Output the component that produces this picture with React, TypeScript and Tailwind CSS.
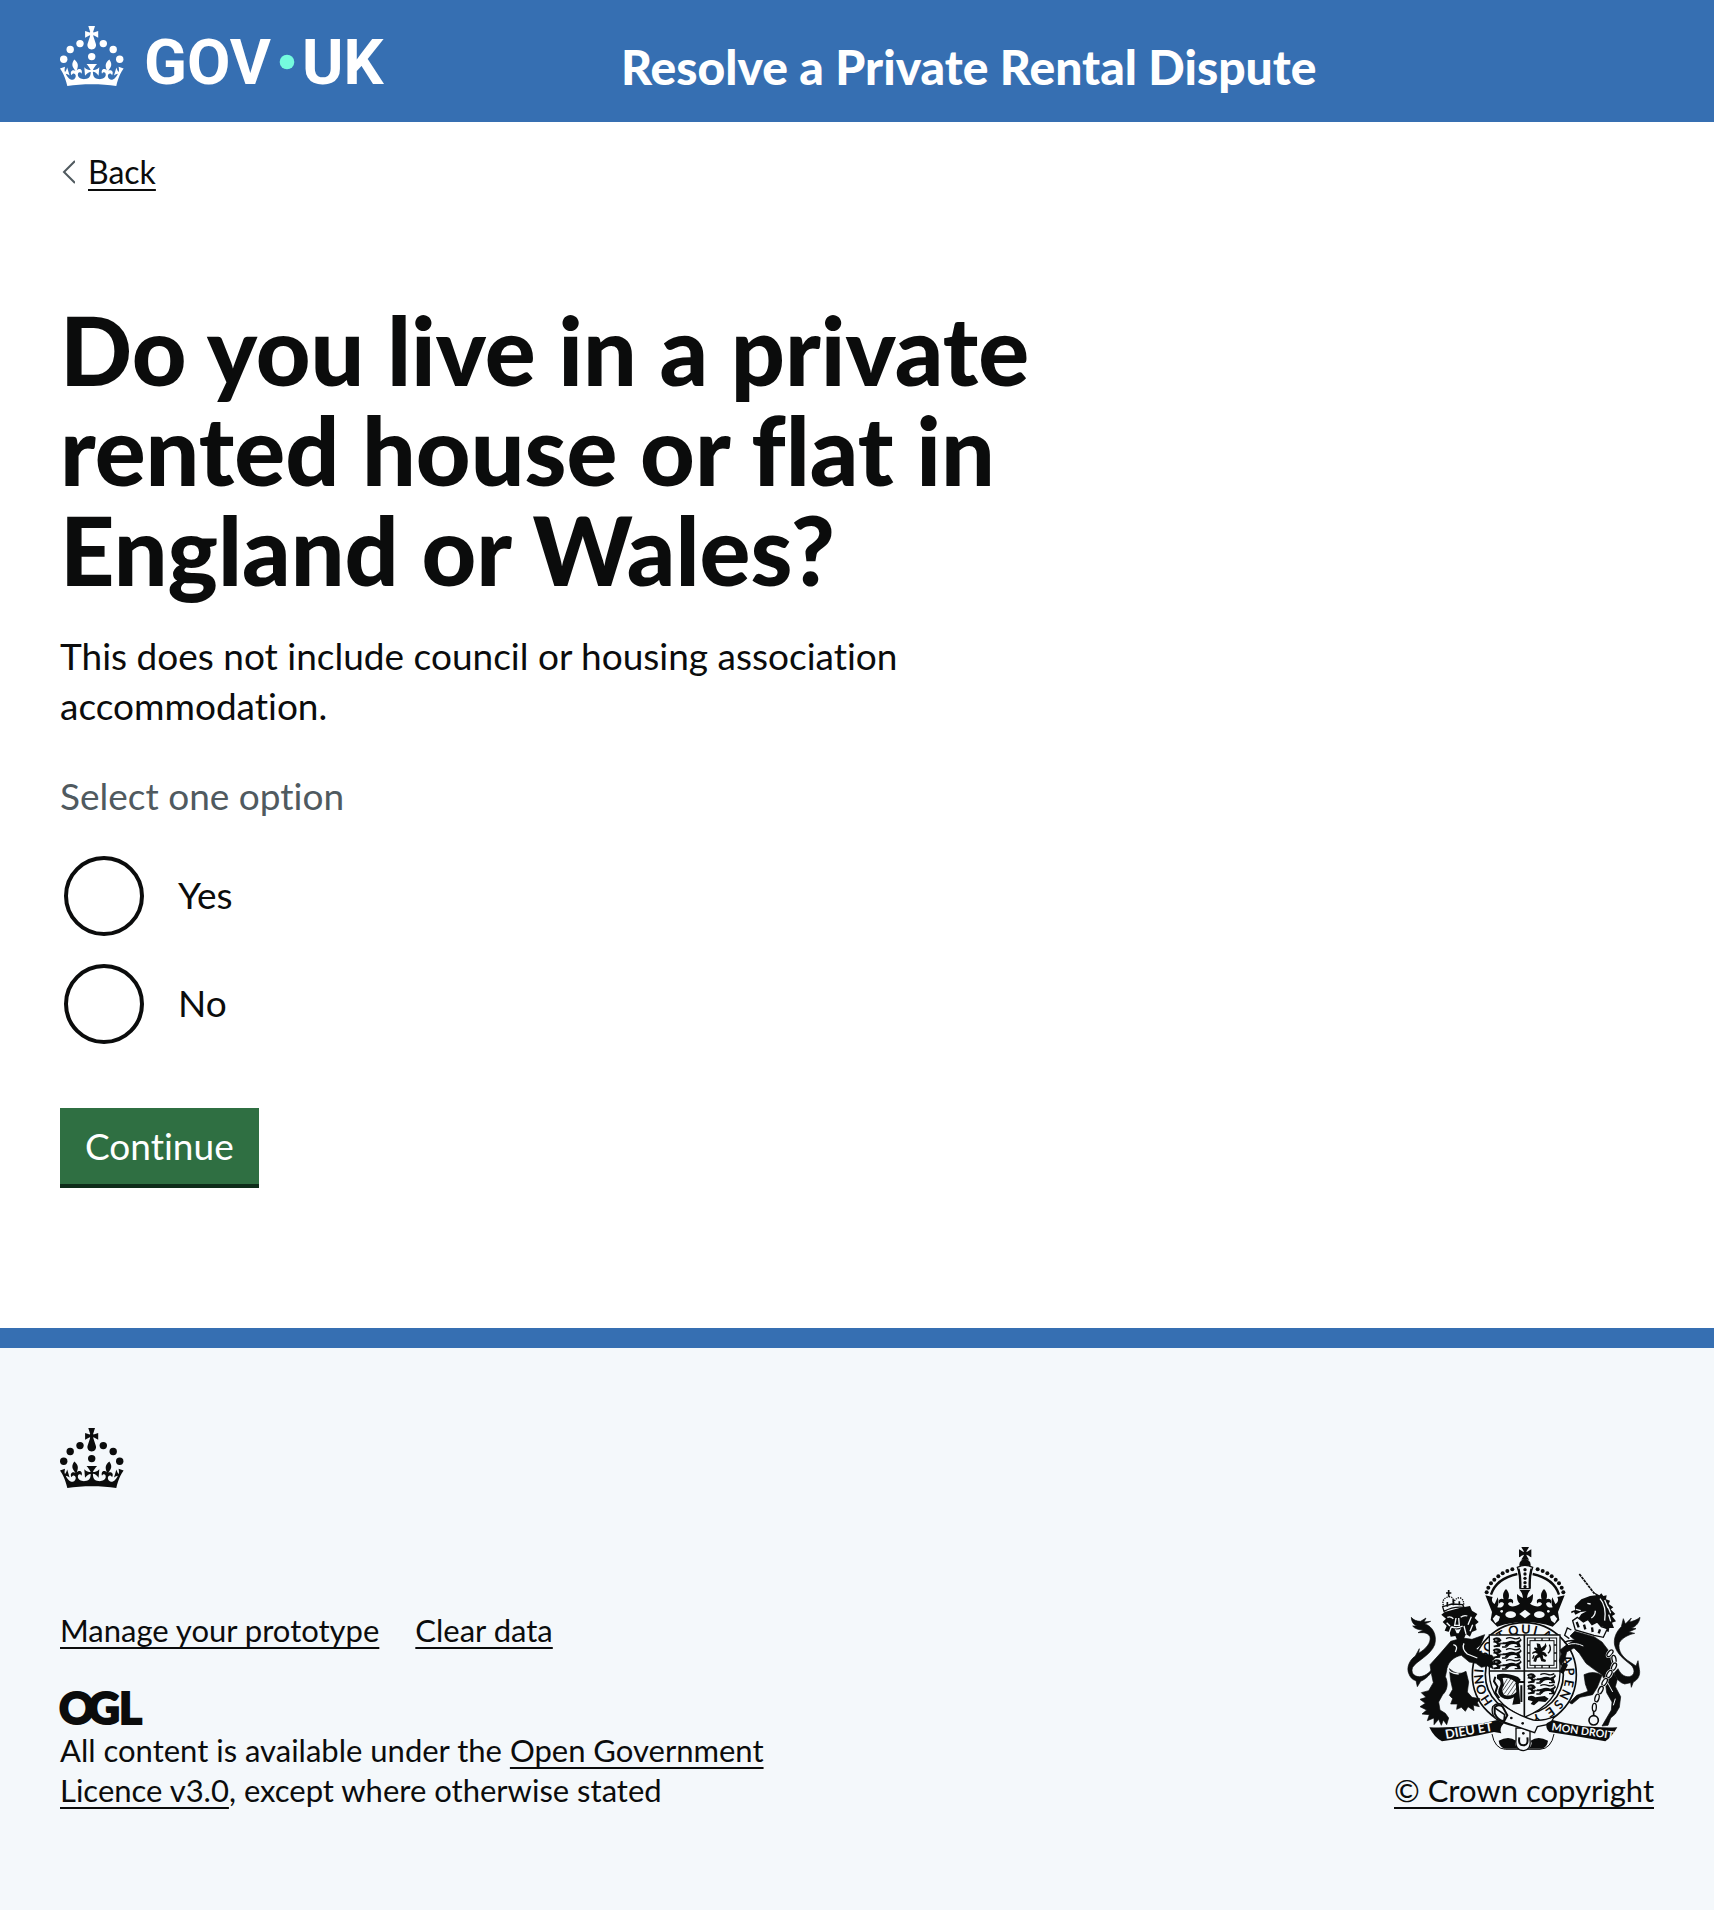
import type { ReactNode } from "react";

const INK = "#0b0c0c";
const PAPER = "#f4f8fb";

function CrownShapes() {
  return (
    <g>
      <circle cx="20" cy="17.6" r="3.7" />
      <circle cx="10.2" cy="23.5" r="3.7" />
      <circle cx="3.7" cy="33.2" r="3.7" />
      <circle cx="31.7" cy="30.6" r="3.7" />
      <circle cx="43.3" cy="17.6" r="3.7" />
      <circle cx="53.2" cy="23.5" r="3.7" />
      <circle cx="59.7" cy="33.2" r="3.7" />
      <path d="M33.1,9.8c.2-.1.3-.3.5-.5l4.6,2.4v-6.8l-4.6,1.5c-.1-.2-.3-.3-.5-.5l1.9-5.9h-6.7l1.9,5.9c-.2.1-.3.3-.5.5l-4.6-1.5v6.8l4.6-2.4c.1.2.3.3.5.5l-2.6,8c-.9,2.8,1.2,5.7,4.1,5.7h0c3,0,5.1-2.9,4.1-5.7l-2.6-8ZM37,37.9s-3.4,3.8-4.1,6.1c2.2,0,4.2-.5,6.4-2.8l-.7,8.5c-2-2.8-4.4-4.1-5.7-3.8.1,3.1.5,6.7,5.8,7.2,3.7.3,6.7-1.5,7-3.8.4-2.6-2-4.3-3.7-1.6-1.4-4.5,2.4-6.1,4.9-3.2-1.9-4.5-1.8-7.7,2.4-10.9,3,4,2.6,7.3-1.2,11.1,2.4-1.3,6.2,0,4,4.6-1.2-2.8-3.7-2.2-4.2.2-.3,1.7.7,3.7,3,4.2,1.9.3,4.7-.9,7-5.9-1.3,0-2.4.7-3.9,1.7l2.4-8c.6,2.3,1.4,3.7,2.2,4.5.6-1.6.5-2.8,0-5.3l5,1.8c-2.6,3.6-5.2,8.7-7.3,17.5-7.4-1.1-15.7-1.7-24.5-1.7h0c-8.8,0-17.1.6-24.5,1.7-2.1-8.9-4.7-13.9-7.3-17.5l5-1.8c-.5,2.5-.6,3.7,0,5.3.8-.8,1.6-2.3,2.2-4.5l2.4,8c-1.5-1-2.6-1.7-3.9-1.7,2.3,5,5.2,6.2,7,5.9,2.3-.4,3.3-2.4,3-4.2-.5-2.4-3-3.1-4.2-.2-2.2-4.6,1.6-6,4-4.6-3.7-3.7-4.2-7.1-1.2-11.1,4.2,3.2,4.3,6.4,2.4,10.9,2.5-2.8,6.3-1.3,4.9,3.2-1.8-2.7-4.1-1-3.7,1.6.3,2.3,3.3,4.1,7,3.8,5.4-.5,5.7-4.2,5.8-7.2-1.3-.2-3.7,1-5.7,3.8l-.7-8.5c2.2,2.3,4.2,2.7,6.4,2.8-.7-2.3-4.1-6.1-4.1-6.1h10.6,0Z" />
    </g>
  );
}

function GovLogo() {
  return (
    <svg viewBox="0 0 324 60" className="block h-[60px] w-[324px] overflow-visible" fill="#fff" role="img" aria-label="GOV.UK">
      <CrownShapes />
      <text x="84" y="58" fontFamily="Roboto, sans-serif" fontWeight="700" fontSize="63">GOV</text>
      <circle cx="227" cy="36" r="7.3" fill="#75fbde" />
      <text x="242" y="58" fontFamily="Roboto, sans-serif" fontWeight="700" fontSize="63">UK</text>
    </svg>
  );
}

function OglLogo() {
  return (
    <svg viewBox="0 0 82 34" className="block h-[34px] w-[82px] overflow-visible" fill={INK} stroke={INK} strokeWidth="2" role="img" aria-label="OGL" fontFamily="Lato, sans-serif" fontWeight="900" fontSize="44">
      <text x="-1" y="33">O</text>
      <text x="28" y="33">G</text>
      <text x="59" y="33">L</text>
    </svg>
  );
}

/* One walking lion of the first and fourth quarters. */
function ShieldLion({ x, y }: { x: number; y: number }) {
  return (
    <g transform={`translate(${x} ${y})`}>
      <path d="M0 4Q8-4 20 0L27 8L22 12Q30 15 44 12Q58 6 70 12L80 8L84 2L87 8L80 15L84 24L76 27L71 20Q58 18 50 22L44 28L36 25L40 20L24 20L22 27L4 29L2 24L14 21L10 16L1 14L4 9Z" />
      <path d="M40 3Q50-3 62 2Q72 6 82 0M28 28H42M66 27H84" fill="none" stroke={INK} strokeWidth="4" />
      <path d="M7 7h7M18 15h12" stroke={PAPER} strokeWidth="2.5" />
    </g>
  );
}

const ARCH_DOTS: [number, number][] = [
  [115, 187], [110, 173], [102, 160], [92, 149], [80, 139], [67, 130], [53, 123], [38, 118],
];

const CHAIN: [number, number, number][] = [
  [660, 370, 40], [672, 388, -10], [672, 410, 25], [658, 432, 30], [644, 456, 30],
  [632, 480, 25], [621, 504, 15], [613, 532, 3],
];

/* Letters of the garter motto with their angle on the ring, clockwise from the top. */
const GARTER_LETTERS: [string, number][] = [
  ["H", -124], ["O", -109], ["N", -96], ["I", -85], ["S", -64], ["O", -52], ["T", -31],
  ["Q", -14], ["U", 2], ["I", 14], ["A", 30], ["A", 71], ["P", 86], ["E", 101], ["N", 116],
  ["S", 131], ["E", 145], ["Y", 164],
];

function CoatOfArms() {
  return (
    <svg viewBox="48 45 708 624" className="block h-[208px] w-[236px]" fill={INK} role="img" aria-label="Royal coat of arms">
      {/* cross, orb and arches */}
      <path d="M394 51h23c-2 6-7 9-8 15 6-1 9-5 15-8v24c-6-3-9-7-15-8 1 6 6 9 8 15h-23c2-6 7-9 8-15-6 1-9 5-15 8v-24c6 3 9 7 15 8-1-6-6-9-8-15Z" />
      <circle cx="405" cy="104" r="17" />
      {ARCH_DOTS.map(([dx, y]) => (
        <g key={dx}>
          <circle cx={405 - dx} cy={y} r="6" />
          <circle cx={405 + dx} cy={y} r="6" />
        </g>
      ))}
      <path d="M303 194Q318 146 382 132M507 194Q492 146 428 132" fill="none" stroke={INK} strokeWidth="7" />
      <path d="M382 112q23-12 46 0q-8 20-8 64h-30q0-44-8-64Z" fill={PAPER} stroke={INK} strokeWidth="4" />
      {[119, 132, 145, 158, 170].map((y) => <circle key={y} cx="405" cy={y} r="5" />)}
      <path d="M386 116q7 25 5 58M424 116q-7 25-5 58" fill="none" stroke={INK} strokeWidth="6" />

      {/* garter */}
      <circle cx="403" cy="434" r="156" fill={PAPER} stroke={INK} strokeWidth="5" />
      <circle cx="403" cy="434" r="117" fill="none" stroke={INK} strokeWidth="5" />
      <g fontFamily="Lato, sans-serif" fontWeight="700" fontSize="38" textAnchor="middle">
        {GARTER_LETTERS.map(([letter, angle]) => (
          <text key={angle} transform={`translate(403 434) rotate(${angle}) translate(0 -123)`}>{letter}</text>
        ))}
      </g>

      {/* crown rim with crosses and fleurs-de-lis */}
      <path d="M286 196L308 201C303 211 307 218 314 222L323 202C327 214 326 224 322 232C332 235 340 230 342 221C338 215 330 216 328 221C323 210 331 203 341 208C337 196 339 186 348 177C357 186 359 196 355 208C365 203 373 210 368 221C366 216 358 215 354 221C358 232 374 232 390 221C382 216 381 206 381 192C388 198 393 202 399 204C398 194 395 187 389 180H421C415 187 412 194 411 204C417 202 422 198 429 192C429 206 428 216 420 221C436 232 452 232 456 221C452 215 444 216 442 221C437 210 445 203 455 208C451 196 453 186 462 177C471 186 473 196 469 208C479 203 487 210 482 221C480 216 472 215 468 221C470 230 478 235 488 232C484 224 483 214 487 202L496 222C503 218 507 211 502 201L524 196L504 246L508 270L488 290Q405 262 322 290L302 270L306 246Z" />
      <g fill={PAPER}>
        <path d="M388 252L405 239L422 252L405 265Z" />
        <ellipse cx="362" cy="254" rx="16" ry="10" />
        <ellipse cx="448" cy="254" rx="16" ry="10" />
        <path d="M308 266l10-12 12 6-4 12-10 8ZM502 266l-10-12-12 6 4 12 10 8Z" />
        <circle cx="335" cy="244" r="4" />
        <circle cx="475" cy="244" r="4" />
      </g>

      {/* shield */}
      <path d="M298 315H510V430Q508 520 403 562Q300 520 298 430Z" fill={PAPER} stroke={INK} strokeWidth="4" />
      <path d="M403 315V562M298 423H510" fill="none" stroke={INK} strokeWidth="5" />
      <ShieldLion x={308} y={323} />
      <ShieldLion x={308} y={356} />
      <ShieldLion x={308} y={389} />
      <ShieldLion x={411} y={431} />
      <ShieldLion x={411} y={464} />
      <path d="M414 500q14-6 22 2l28-4 12 8-10 10-20-2-14 12-10-4 6-8-14-4Z" />
      <rect x="412" y="324" width="88" height="90" fill="none" stroke={INK} strokeWidth="3" />
      <rect x="420" y="332" width="72" height="74" fill="none" stroke={INK} strokeWidth="3" />
      <path d="M412 345h8M412 369h8M412 393h8M492 345h8M492 369h8M492 393h8M435 324v8M456 324v8M478 324v8M435 406v8M456 406v8M478 406v8" stroke={INK} strokeWidth="4" />
      <path d="M440 340l10 2 4 12 10-8 2-8 4 10-6 12-8 4 10 4 6 10-6 2-8-6 2 12 8 4-2 6-12-2-4-12-8 2-4 12-8-2 4-14 10-8-8-4-10 4 2-6 10-4-6-6 2-4 8 2Z" />
      <path d="M478 344q8 16-4 26M432 376l-4 10" fill="none" stroke={INK} strokeWidth="4" />
      {/* harp */}
      <path d="M321 434Q344 426 384 441L392 449L386 462L391 521L367 524L372 502Q352 514 332 500Q318 488 330 468Q336 452 321 446Z" />
      <path d="M338 444Q358 440 377 457L379 486Q364 502 342 494Q332 482 342 466Z" fill={PAPER} />
      <path d="M338 482l26-38M343 491l30-42M352 496l26-38M364 496l15-22M338 470l14-24" stroke={INK} strokeWidth="2" />
      <path d="M316 440l-4 14 10 16-6 18 12 16M384 456h18M394 466v50" fill="none" stroke={INK} strokeWidth="6" />

      {/* ribbon feet */}
      <path d="M306 612q8 44 40 46h104q34-2 42-46" fill={PAPER} stroke={INK} strokeWidth="3" />
      <path d="M326 632q30-16 52 0q-8 12 6 24h-40q-16-6-18-24ZM474 632q-30-16-52 0q8 12-6 24h40q16-6 18-24Z" />

      {/* buckled end of the garter */}
      <path d="M378 594h42v36q4 30-20 32q-26-2-22-32Z" fill={PAPER} stroke={INK} strokeWidth="4" />
      <path d="M388 622q-4 24 12 24t12-24" fill="none" stroke={INK} strokeWidth="6" />
      <path d="M308 530q12-14 30-6q40 30 92 46q30 4 62-10l-10 22-40 8-8 18-24-8-90-32q-18-14-12-38Z" fill={PAPER} stroke={INK} strokeWidth="4" />
      <path d="M314 532q10-12 24-2l14 26-10 18q-20-4-28-24Z" fill="none" stroke={INK} strokeWidth="6" />
      <path d="M312 532l32 22-2 18" fill="none" stroke={INK} strokeWidth="5" />
      <circle cx="364" cy="564" r="4" />
      <circle cx="398" cy="580" r="4" />
      <circle cx="400" cy="610" r="4" />

      {/* lion supporter */}
      <path d="M78 452L82 470L92 454C114 444 130 424 136 402C128 420 108 440 88 440C70 440 62 426 68 412C78 394 122 376 134 344C142 316 128 288 104 282L122 274L102 276L108 264L92 274C80 274 70 270 64 262C64 274 70 284 80 288L68 288C74 296 86 300 100 300L84 308C100 308 112 306 120 320C124 338 108 356 86 370L88 356L76 378C56 392 50 414 56 430C60 442 68 450 78 452Z" stroke={INK} strokeWidth="2" />
      <path d="M182 334L218 324L246 328L284 314L272 344L258 356L282 372L306 376L314 386L306 392L316 402L306 406L310 416L292 408L274 412L258 400L238 396L214 376C192 380 176 396 172 412L166 440C176 458 172 482 158 494L146 516L150 540L166 550L176 564L170 584L160 570L154 586L146 568L132 584L132 564L112 572L118 554L96 552L110 540L90 530L106 520L90 508L108 502L94 488L116 482L130 458L124 430L120 404Q150 372 182 334Z" stroke={INK} strokeWidth="2" strokeLinejoin="round" />
      <path d="M178 416Q204 440 228 424L236 456L232 486L246 502L270 506L262 518L268 530L250 526L252 542L234 530L226 544L214 532L200 538L202 522L182 522L188 506L178 496L188 478L182 452Z" stroke={INK} strokeWidth="2" strokeLinejoin="round" />
      <path d="M174 414Q176 430 206 432M222 340Q214 356 232 372L262 384M190 344Q206 348 196 366" fill="none" stroke={PAPER} strokeWidth="4" />
      <path d="M164 246L208 234L240 228L246 242L262 252L254 264L266 276L256 284L260 300L246 306L240 320L228 312L220 330L204 336L196 318L182 320L178 306L164 302L170 288L158 276L168 266L154 254Z" />
      <path d="M172 262q10-4 18 4M212 262q10-8 20-4M198 264l-4 22h14l-2-22M184 290q16 8 34-2M184 290l-8 22M222 288l6 24M244 260l-10 24M248 284l-8 20M170 278l10 10" fill="none" stroke={PAPER} strokeWidth="4" />
      <path d="M194 296q10 6 20-2l-8 16h-6Z" fill={PAPER} />
      <path d="M162 244L158 230L186 222L218 224L222 232Q190 228 162 244Z" fill={PAPER} stroke={INK} strokeWidth="4" />
      <path d="M160 226q-6-22 18-26q14 0 12 20q8-20 22-16q12 8 8 24" fill="none" stroke={INK} strokeWidth="4" strokeDasharray="4 3" />
      <path d="M176 180v20M168 189h16" stroke={INK} strokeWidth="5" />
      <path d="M172 230v-14M190 226v-18M208 226v-12" stroke={INK} strokeWidth="5" />

      {/* unicorn supporter */}
      <path d="M568 132L614 192" stroke={INK} strokeWidth="5" strokeDasharray="9 2" />
      <path d="M544 244L556 240L554 228L574 208L600 198L618 196L610 186L628 196L634 190L640 198L650 196L648 208L660 212L656 222L670 232L662 238L676 252L666 258L678 274L666 278L672 294L658 294L656 306L646 302L640 290L610 284L562 270L574 252L590 244L572 246L556 254L552 246L544 250Z" />
      <path d="M592 220l10 2M558 238l14 4M630 206q20 22 14 66M644 210l10 24M654 230l8 20M656 254l6 20M604 264q12-8 12-22" fill="none" stroke={PAPER} strokeWidth="4" />
      <path d="M548 272L562 262L580 276L594 268L606 284L622 276L634 290L652 296L640 322L612 316L556 300Z" fill={PAPER} stroke={INK} strokeWidth="4" />
      <path d="M560 276l6 16M582 284l4 14M606 292l2 14M630 298l-4 12" stroke={INK} strokeWidth="7" />
      <path d="M554 304L612 320L636 336L656 362L666 390L664 420L682 448L676 470L692 500L688 532L676 552L662 564L654 586L636 588L650 564L664 540L666 516L650 488L646 456L636 434L612 418L588 400L568 370L552 354L530 366L524 392L512 404L508 392L514 372L510 360L528 346L554 330L540 318Z" stroke={INK} strokeWidth="2" strokeLinejoin="round" />
      <path d="M582 434Q612 420 636 436L622 472L608 494L570 502L546 522L538 518L560 496L594 484L586 462Z" stroke={INK} strokeWidth="2" />
      <path d="M520 396L534 404L520 432L508 426Z" />
      <path d="M544 300l-12-6-8 22 14 10M522 338q20-12 52-2" fill="none" stroke={INK} strokeWidth="4" />
      <path d="M534 344q22-8 46 4" fill="none" stroke={PAPER} strokeWidth="3" />
      <path d="M672 430Q682 456 704 462L722 458L724 472L730 456C744 450 752 434 748 418L744 392L738 408L720 396C698 382 682 362 688 338C698 322 716 314 734 310L716 306L738 296L724 294C738 290 748 278 750 262C738 272 726 274 718 276L724 264L706 282L700 266L694 290C678 306 670 326 674 346C680 372 704 390 722 404C736 416 736 436 718 440C700 442 690 428 684 416Z" stroke={INK} strokeWidth="2" />
      <path d="M676 506l-6 20M652 456l16 30" fill="none" stroke={PAPER} strokeWidth="3" />
      {CHAIN.map(([x, y, a]) => (
        <g key={y} transform={`rotate(${a} ${x} ${y})`} fill={PAPER}>
          <ellipse cx={x} cy={y} rx="10" ry="16" />
          <ellipse cx={x} cy={y} rx="6" ry="12" stroke={INK} strokeWidth="4" />
        </g>
      ))}
      <circle cx="611" cy="571" r="14" fill={PAPER} stroke={INK} strokeWidth="5" />
      <path d="M611 544v14" stroke={INK} strokeWidth="5" />

      {/* motto scroll */}
      <path d="M118 592Q220 596 322 570L342 580Q326 596 334 610L312 606Q240 622 156 634Q132 622 118 592Z" />
      <path d="M682 592Q580 596 488 570L470 580Q466 596 478 606Q560 618 646 634Q664 622 682 592Z" />
      <g fill={PAPER} fontFamily="Lato, sans-serif" fontWeight="700">
        <text transform="translate(168 627) rotate(-10)" fontSize="38">DIEU ET</text>
        <text transform="translate(484 601) rotate(8)" fontSize="32">MON DROIT</text>
      </g>
    </svg>
  );
}

function TextLink({ children }: { children: ReactNode }) {
  return (
    <a href="#" className="underline decoration-2 underline-offset-[5px] [text-decoration-skip-ink:none]">
      {children}
    </a>
  );
}

function Radio({ id, label }: { id: string; label: string }) {
  return (
    <div className="flex h-20 items-center">
      <input
        id={id}
        type="radio"
        name="private-rental"
        className="ml-1 size-20 shrink-0 appearance-none rounded-full border-4 border-[#0b0c0c] bg-white checked:shadow-[inset_0_0_0_16px_#fff] checked:bg-[#0b0c0c]"
      />
      <label htmlFor={id} className="pb-[2px] pl-[34px] text-[37px] leading-[50px]">{label}</label>
    </div>
  );
}

export default function App() {
  return (
    <div className="flex min-h-screen flex-col bg-white font-[Lato,sans-serif] text-[#0b0c0c] [font-variant-ligatures:none]">
      <header className="flex items-center bg-[#366fb2] px-[60px] pt-[26px] pb-9 text-white">
        <GovLogo />
        <div className="-mb-3 ml-[237px] pt-[10px] text-[48px] leading-[60px] font-black">
          Resolve a Private Rental Dispute
        </div>
      </header>

      <div className="px-[60px] pt-[30px]">
        <nav className="flex items-center gap-[13px] text-[32px] leading-[40px]">
          <svg viewBox="0 0 15 24" className="h-6 w-[15px]" fill="none" stroke="#505a5f" strokeWidth="2" aria-hidden="true">
            <path d="M15 1L4 12L15 23" />
          </svg>
          <TextLink>Back</TextLink>
        </nav>

        <main className="max-w-[1040px] pt-[107px] pb-[140px]">
          <form onSubmit={(e) => e.preventDefault()}>
            <h1 className="text-[95px] leading-[100px] font-black">
              Do you live in a private rented house or flat in England or Wales?
            </h1>
            <p className="mt-8 max-w-[900px] text-[37px] leading-[50px]">
              This does not include council or housing association accommodation.
            </p>
            <fieldset className="mt-10">
              <legend className="text-[37px] leading-[50px] text-[#505a5f]">Select one option</legend>
              <div className="mt-[35px] flex flex-col gap-7">
                <Radio id="rental-yes" label="Yes" />
                <Radio id="rental-no" label="No" />
              </div>
            </fieldset>
            <button
              type="submit"
              className="mt-16 block border-b-4 border-[#0e2c19] bg-[#2f6f42] px-[25px] py-[13px] text-[37px] leading-[50px] text-white"
            >
              Continue
            </button>
          </form>
        </main>
      </div>

      <footer className="grow border-t-[20px] border-[#366fb2] bg-[#f4f8fb] px-[60px] pt-20 pb-[100px] text-[31px] leading-[40px]">
        <svg viewBox="0 0 64 60" className="block h-[60px] w-16" fill={INK} role="img" aria-label="Crown">
          <CrownShapes />
        </svg>
        <div className="mt-[57px] flex items-end justify-between">
          <div>
            <div className="flex gap-9">
              <TextLink>Manage your prototype</TextLink>
              <TextLink>Clear data</TextLink>
            </div>
            <div className="mt-[41px]">
              <OglLogo />
              <p className="mt-[5px] max-w-[760px]">
                All content is available under the <TextLink>Open Government Licence v3.0</TextLink>, except where
                otherwise stated
              </p>
            </div>
          </div>
          <div className="flex flex-col items-center gap-[17px]">
            <CoatOfArms />
            <TextLink>© Crown copyright</TextLink>
          </div>
        </div>
      </footer>
    </div>
  );
}
